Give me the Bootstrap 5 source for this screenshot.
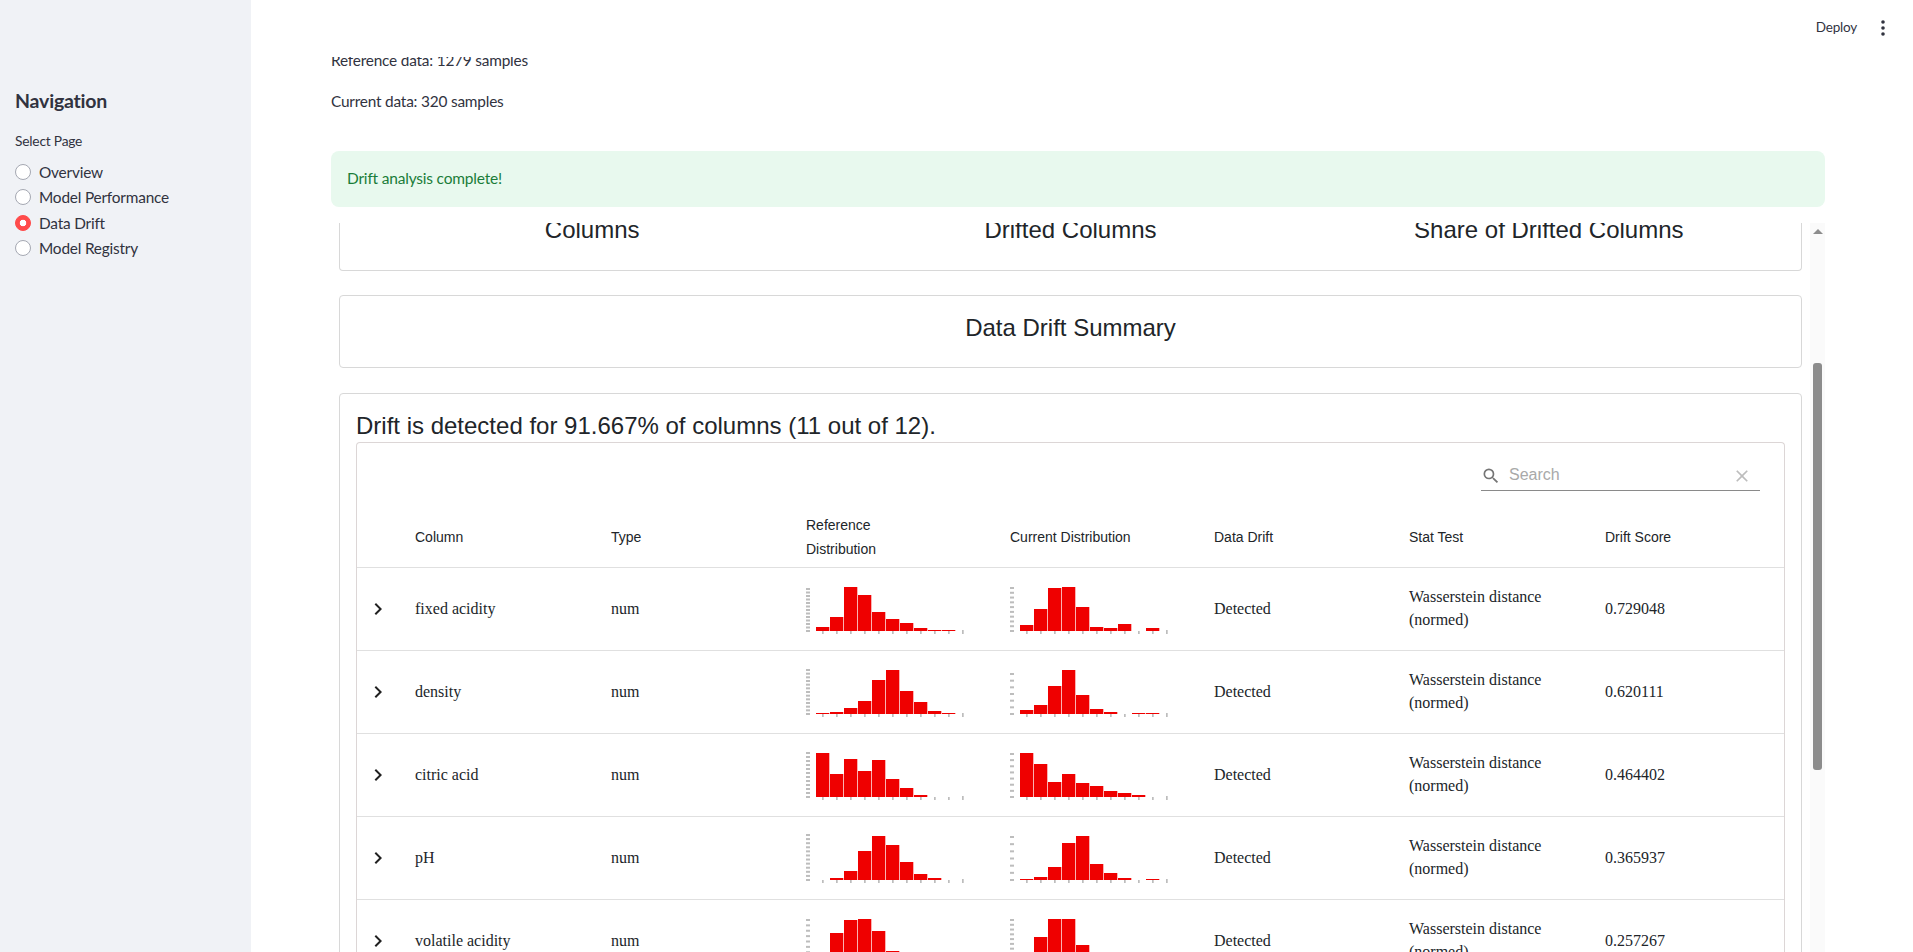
<!DOCTYPE html>
<html>
<head>
    <meta charset="UTF-8">
    <title>Data Drift</title>
    <link href="https://cdn.jsdelivr.net/npm/bootstrap@5.3.0/dist/css/bootstrap.min.css" rel="stylesheet">
    <style>
        html, body {
            height: 952px;
            overflow: hidden;
        }
        body {
            font-family: "Lato", "Noto Sans", sans-serif;
            color: #31333f;
            background: #fff;
            letter-spacing: -0.2px;
        }
        .side-panel {
            width: 251px;
            flex: none;
            background: #f0f2f6;
            padding: 85px 0 0 15px;
        }
        .side-title {
            font-size: 19.5px;
            font-weight: 700;
            line-height: 32px;
            margin-bottom: 14px;
        }
        .side-label {
            font-size: 13.75px;
            line-height: 20px;
            margin-bottom: 8px;
        }
        .side-panel .form-check {
            min-height: 0;
            height: 25.5px;
            margin: 0;
            padding: 0;
            display: flex;
            align-items: center;
            gap: 8px;
            font-size: 15.4px;
        }
        .side-panel .form-check-input {
            width: 16px;
            height: 16px;
            margin: 0;
            float: none;
            flex: none;
            background-color: #fff;
            border: 1px solid #a5a8b2;
        }
        .side-panel .form-check-input:checked {
            background-color: #ff4b4b;
            border-color: #ff4b4b;
            background-image: radial-gradient(circle, #fff 3px, transparent 3.6px);
        }
        .side-panel .form-check-label {
            line-height: 20px;
        }
        .main-panel {
            min-width: 0;
            height: 952px;
        }
        .top-bar {
            height: 56px;
            flex: none;
            padding-right: 23px;
            padding-bottom: 1px;
            margin-bottom: 1px;
            font-size: 13.5px;
        }
        .deploy-btn {
            margin-right: 19px;
        }
        .page-body {
            padding: 0 88px 0 80px;
            overflow: hidden;
            flex: 1;
            min-height: 0;
        }
        .info-line {
            font-size: 15.4px;
            line-height: 24px;
            margin: 0 0 16px;
        }
        .info-line.cut {
            margin-top: -9px;
            margin-bottom: 17px;
        }
        .done-box {
            height: 56px;
            margin-top: 38px;
            padding-left: 16px;
            background: #e8f9ee;
            border-radius: 8px;
            color: #1a7d39;
            font-size: 15.5px;
        }
        .frame-box {
            margin-top: 16px;
            height: 729px;
            overflow: hidden;
            font-family: "Liberation Sans", Arial, sans-serif;
            color: #212529;
            letter-spacing: 0;
        }
        .frame-content {
            min-width: 0;
            padding-left: 8px;
            padding-right: 8px;
        }
        .box-line {
            border: 1px solid #d8d8d8;
            border-radius: 4px;
        }
        .stats-box {
            margin-top: -8px;
            border-top: 0;
            border-radius: 0 0 4px 4px;
            height: 56px;
            padding: 0 13px;
            font-size: 24px;
            line-height: 29px;
            text-align: center;
            display: grid;
            grid-template-columns: repeat(3, 1fr);
        }
        .summary-box {
            margin-top: 24px;
            height: 73px;
            font-size: 24px;
            line-height: 29px;
            text-align: center;
            padding-top: 17px;
        }
        .drift-box {
            margin-top: 25px;
            padding: 17px 16px 0;
        }
        .drift-title {
            font-size: 24px;
            line-height: 29px;
            font-weight: 400;
            margin: 0 0 2px;
        }
        .table-box {
            border: 1px solid #dcd6d6;
            border-bottom: 0;
            border-radius: 4px 4px 0 0;
        }
        .search-row {
            padding: 19px 24px 0 0;
        }
        .search-field {
            width: 279px;
            height: 29px;
            border-bottom: 1px solid #8a8a8a;
            padding: 0 8px 0 0;
            font-size: 16px;
            color: #a9a9a9;
        }
        .search-field svg {
            flex: none;
        }
        .search-text {
            margin-bottom: 2px;
        }
        .search-icon {
            margin-bottom: 1px;
        }
        .drift-table.table {
            table-layout: fixed;
            margin: 0;
            width: 1427px;
        }
        .drift-table.table > :not(caption) > * > * {
            padding: 0;
            border-bottom: 1px solid #e0e0e0;
            vertical-align: middle;
            box-shadow: none;
        }
        .drift-table th {
            font-size: 14px;
            font-weight: 400;
            line-height: 24px;
            height: 76px;
            padding-top: 16px !important;
            color: #212529;
        }
        .drift-table td {
            font-family: "Liberation Serif", "Times New Roman", serif;
            font-size: 16px;
            line-height: 23px;
            height: 83px;
            color: #212529;
        }
        .drift-table.table > :not(caption) > * > .stat-cell {
            padding-bottom: 2px;
        }
        .drift-table svg {
            display: block;
        }
        .expand-icon {
            margin-left: 9px;
        }
        .fake-scroll {
            width: 15px;
            flex: none;
            background: #fafafa;
        }
        .scroll-up {
            width: 0;
            height: 0;
            margin: 6px auto 0;
            border-left: 5px solid transparent;
            border-right: 5px solid transparent;
            border-bottom: 5px solid #8c8c8c;
        }
        .scroll-thumb {
            width: 9px;
            height: 407px;
            margin: 129px auto 0;
            background: #8c8c8c;
            border-radius: 3px;
        }
    </style>
</head>
<body class="d-flex">
    <aside class="side-panel">
        <h2 class="side-title">Navigation</h2>
        <div class="side-label">Select Page</div>
        <div class="form-check">
            <input class="form-check-input" type="radio" name="page" id="p1">
            <label class="form-check-label" for="p1">Overview</label>
        </div>
        <div class="form-check">
            <input class="form-check-input" type="radio" name="page" id="p2">
            <label class="form-check-label" for="p2">Model Performance</label>
        </div>
        <div class="form-check">
            <input class="form-check-input" type="radio" name="page" id="p3" checked>
            <label class="form-check-label" for="p3">Data Drift</label>
        </div>
        <div class="form-check">
            <input class="form-check-input" type="radio" name="page" id="p4">
            <label class="form-check-label" for="p4">Model Registry</label>
        </div>
    </aside>

    <main class="main-panel flex-grow-1 d-flex flex-column">
        <div class="top-bar d-flex justify-content-end align-items-center">
            <span class="deploy-btn">Deploy</span>
            <svg width="14" height="16" viewBox="0 0 14 16" fill="#31333f">
                <circle cx="7" cy="2" r="1.8"/><circle cx="7" cy="8" r="1.8"/><circle cx="7" cy="14" r="1.8"/>
            </svg>
        </div>
        <div class="page-body">
            <p class="info-line cut">Reference data: 1279 samples</p>
            <p class="info-line">Current data: 320 samples</p>
            <div class="done-box d-flex align-items-center">Drift analysis complete!</div>

            <div class="frame-box d-flex">
                <div class="frame-content flex-grow-1">
                    <div class="stats-box box-line">
                        <div>Columns</div>
                        <div>Drifted Columns</div>
                        <div>Share of Drifted Columns</div>
                    </div>
                    <div class="summary-box box-line">Data Drift Summary</div>
                    <div class="drift-box box-line">
                        <h3 class="drift-title">Drift is detected for 91.667% of columns (11 out of 12).</h3>
                        <div class="table-box">
                            <div class="search-row d-flex justify-content-end">
                                <div class="search-field d-flex align-items-center">
                                    <svg class="search-icon" width="20" height="20" viewBox="0 0 24 24" fill="#757575"><path d="M15.5 14h-.79l-.28-.27A6.471 6.471 0 0 0 16 9.5 6.5 6.5 0 1 0 9.5 16c1.61 0 3.09-.59 4.23-1.57l.27.28v.79l5 4.99L20.49 19l-4.99-5zm-6 0C7.01 14 5 11.99 5 9.5S7.01 5 9.5 5 14 7.01 14 9.5 11.99 14 9.5 14z"/></svg>
                                    <span class="search-text ms-2 flex-grow-1">Search</span>
                                    <svg width="20" height="20" viewBox="0 0 24 24" fill="#bdbdbd"><path d="M19 6.41 17.59 5 12 10.59 6.41 5 5 6.41 10.59 12 5 17.59 6.41 19 12 13.41 17.59 19 19 17.59 13.41 12z"/></svg>
                                </div>
                            </div>
                            <table class="table drift-table">
                                <colgroup>
                                    <col style="width:58px"><col style="width:196px"><col style="width:195px"><col style="width:204px"><col style="width:204px"><col style="width:195px"><col style="width:196px"><col>
                                </colgroup>
                                <thead>
                                    <tr>
                                        <th></th>
                                        <th>Column</th>
                                        <th>Type</th>
                                        <th>Reference<br>Distribution</th>
                                        <th>Current Distribution</th>
                                        <th>Data Drift</th>
                                        <th>Stat Test</th>
                                        <th>Drift Score</th>
                                    </tr>
                                </thead>
                                <tbody id="driftRows"></tbody>
                            </table>
                        </div>
                    </div>
                </div>
                <div class="fake-scroll">
                    <div class="scroll-up"></div>
                    <div class="scroll-thumb"></div>
                </div>
            </div>
        </div>
    </main>

    <script>
        // bar heights read off the histograms, tallest bar = 44
        // tick arrays are [tick count, gap above the top tick]
        const rows = [
            { name: 'fixed acidity', score: '0.729048',
              ref: [4, 14, 44, 36, 19, 12, 8, 3, 1, 1], refTicks: [12, 2],
              cur: [6, 22, 43, 44, 24, 4, 3, 7, 0, 3], curTicks: [9, 1] },
            { name: 'density', score: '0.620111',
              ref: [1, 2, 6, 13, 34, 44, 23, 12, 3, 1], refTicks: [12, 0],
              cur: [4, 9, 28, 44, 19, 5, 2, 0, 1, 1], curTicks: [6, 4] },
            { name: 'citric acid', score: '0.464402',
              ref: [44, 23, 38, 26, 37, 18, 9, 2, 0, 0], refTicks: [11, 0],
              cur: [44, 33, 15, 23, 14, 11, 6, 4, 2, 0], curTicks: [7, 1] },
            { name: 'pH', score: '0.365937',
              ref: [0, 2, 9, 29, 44, 35, 18, 6, 2, 0], refTicks: [11, -1],
              cur: [1, 3, 13, 37, 44, 16, 7, 2, 0, 1], curTicks: [6, 1] },
            { name: 'volatile acidity', score: '0.257267',
              ref: [0, 30, 43, 44, 32, 12, 4, 1, 0, 0], refTicks: [8, 1],
              cur: [0, 26, 44, 44, 18, 3, 1, 0, 0, 0], curTicks: [9, 1] }
        ];

        function histogram(bars, ticks) {
            const step = (44 - ticks[1]) / ticks[0];
            let out = '<svg width="165" height="50" viewBox="0 0 165 50">';
            for (let i = 0; i <= ticks[0]; i++) {
                out += `<rect x="0" y="${46 - i * step}" width="4" height="2" fill="#bdbdbd"/>`;
            }
            for (let i = 0; i <= 10; i++) {
                const top = i == 10 ? 46 : 47;
                out += `<rect x="${16 + i * 14}" y="${top}" width="1.7" height="${50.5 - top}" fill="#bdbdbd"/>`;
            }
            bars.forEach((h, i) => {
                if (h > 0) out += `<rect x="${10 + i * 14}" y="${47 - h}" width="13.3" height="${h}" fill="#ef0000"/>`;
            });
            return out + '</svg>';
        }

        const chevron = '<svg class="expand-icon" width="24" height="24" viewBox="0 0 24 24" fill="#212121"><path d="M10 6 8.59 7.41 13.17 12l-4.58 4.59L10 18l6-6z"/></svg>';

        document.getElementById('driftRows').innerHTML = rows.map(r => `
            <tr>
                <td>${chevron}</td>
                <td>${r.name}</td>
                <td>num</td>
                <td>${histogram(r.ref, r.refTicks)}</td>
                <td>${histogram(r.cur, r.curTicks)}</td>
                <td>Detected</td>
                <td class="stat-cell">Wasserstein distance<br>(normed)</td>
                <td>${r.score}</td>
            </tr>`).join('');
    </script>
    <script src="https://cdn.jsdelivr.net/npm/bootstrap@5.3.0/dist/js/bootstrap.bundle.min.js"></script>
</body>
</html>
